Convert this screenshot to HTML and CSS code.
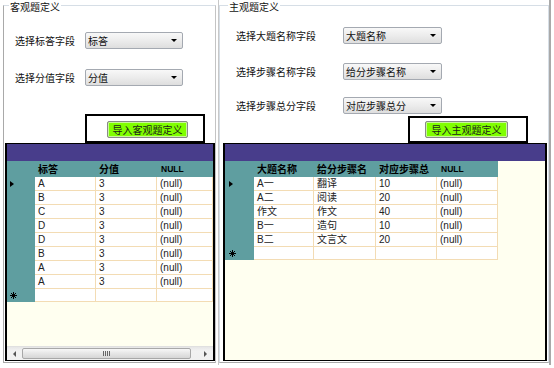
FILE: index.html
```html
<!DOCTYPE html>
<html>
<head>
<meta charset="utf-8">
<link rel="stylesheet" href="styles.css">
</head>
<body>
<div class="app">
  <div class="panel panel-left">
    <div class="group group-left">
      <span class="legend">客观题定义</span>
      <div class="field f1"><span class="lbl">选择标答字段</span><div class="combo"><span>标答</span><i class="arrow"></i></div></div>
      <div class="field f2"><span class="lbl">选择分值字段</span><div class="combo"><span>分值</span><i class="arrow"></i></div></div>
      <div class="frame"><button class="btn">导入客观题定义</button></div>
      <div class="grid">
        <div class="caption"></div>
        <div class="row hdr"><div class="rh"></div><div class="cell w61">标答</div><div class="cell w61">分值</div><div class="cell fill null">NULL</div></div>
        <div class="row"><div class="rh"><i class="cur"></i></div><div class="cell w61">A</div><div class="cell w61">3</div><div class="cell fill">(null)</div></div>
        <div class="row"><div class="rh"></div><div class="cell w61">B</div><div class="cell w61">3</div><div class="cell fill">(null)</div></div>
        <div class="row"><div class="rh"></div><div class="cell w61">C</div><div class="cell w61">3</div><div class="cell fill">(null)</div></div>
        <div class="row"><div class="rh"></div><div class="cell w61">D</div><div class="cell w61">3</div><div class="cell fill">(null)</div></div>
        <div class="row"><div class="rh"></div><div class="cell w61">D</div><div class="cell w61">3</div><div class="cell fill">(null)</div></div>
        <div class="row"><div class="rh"></div><div class="cell w61">B</div><div class="cell w61">3</div><div class="cell fill">(null)</div></div>
        <div class="row"><div class="rh"></div><div class="cell w61">A</div><div class="cell w61">3</div><div class="cell fill">(null)</div></div>
        <div class="row"><div class="rh"></div><div class="cell w61">A</div><div class="cell w61">3</div><div class="cell fill">(null)</div></div>
        <div class="row newrow"><div class="rh"><svg class="star" width="7" height="7" viewBox="0 0 7 7"><path d="M3.5 0V7M0 3.5H7M1 1L6 6M6 1L1 6" stroke="#000" stroke-width="1" fill="none"/></svg></div><div class="cell w61"></div><div class="cell w61"></div><div class="cell fill"></div></div>
        <div class="filler"></div>
        <div class="hscroll">
          <div class="sbtn"><i class="tl"></i></div>
          <div class="thumb"><span class="grip"></span></div>
          <div class="track"></div>
          <div class="sbtn"><i class="tr"></i></div>
        </div>
      </div>
    </div>
  </div>
  <div class="panel panel-right">
    <div class="group group-right">
      <span class="legend">主观题定义</span>
      <div class="field r1"><span class="lbl">选择大题名称字段</span><div class="combo"><span>大题名称</span><i class="arrow"></i></div></div>
      <div class="field r2"><span class="lbl">选择步骤名称字段</span><div class="combo"><span>给分步骤名称</span><i class="arrow"></i></div></div>
      <div class="field r3"><span class="lbl">选择步骤总分字段</span><div class="combo"><span>对应步骤总分</span><i class="arrow"></i></div></div>
      <div class="frame"><button class="btn">导入主观题定义</button></div>
      <div class="grid">
        <div class="caption"></div>
        <div class="row hdr"><div class="rh"></div><div class="cell w60">大题名称</div><div class="cell w62">给分步骤名</div><div class="cell w61">对应步骤总</div><div class="cell w61 null">NULL</div></div>
        <div class="row"><div class="rh"><i class="cur"></i></div><div class="cell w60">A一</div><div class="cell w62">翻译</div><div class="cell w61">10</div><div class="cell w61">(null)</div></div>
        <div class="row"><div class="rh"></div><div class="cell w60">A二</div><div class="cell w62">阅读</div><div class="cell w61">20</div><div class="cell w61">(null)</div></div>
        <div class="row"><div class="rh"></div><div class="cell w60">作文</div><div class="cell w62">作文</div><div class="cell w61">40</div><div class="cell w61">(null)</div></div>
        <div class="row"><div class="rh"></div><div class="cell w60">B一</div><div class="cell w62">造句</div><div class="cell w61">10</div><div class="cell w61">(null)</div></div>
        <div class="row"><div class="rh"></div><div class="cell w60">B二</div><div class="cell w62">文言文</div><div class="cell w61">20</div><div class="cell w61">(null)</div></div>
        <div class="row newrow"><div class="rh"><svg class="star" width="7" height="7" viewBox="0 0 7 7"><path d="M3.5 0V7M0 3.5H7M1 1L6 6M6 1L1 6" stroke="#000" stroke-width="1" fill="none"/></svg></div><div class="cell w60"></div><div class="cell w62"></div><div class="cell w61"></div><div class="cell w61"></div></div>
        <div class="filler"></div>
      </div>
    </div>
  </div>
</div>
</body>
</html>
```

FILE: styles.css
```css
* { box-sizing: border-box; }
html, body { margin: 0; padding: 0; }
body {
  width: 554px;
  height: 368px;
  overflow: hidden;
  background: #fff;
  font-family: "Noto Sans CJK SC", "Liberation Sans", sans-serif;
  font-size: 10px;
  color: #000;
}
.app {
  display: flex;
  height: 368px;
}
.panel-left {
  width: 216px;
  padding-left: 3px;
  flex: none;
}
.panel-right {
  margin-left: 2px;
  border-left: 1px solid #c8c8c8;
  border-right: 2px solid #a9a9a9;
  height: 365px;
  flex: none;
}
.group {
  margin-top: 5px;
  height: 358px;
  border: 1px solid #d6dee6;
  display: flex;
  flex-direction: column;
  align-items: flex-start;
}
.group-left {
  width: 213px;
  border-left-color: #a9a9a9;
  border-bottom-color: #a9a9a9;
  border-right-color: #c4c4c4;
}
.group-right {
  width: 330px;
  border-bottom-color: #a9a9a9;
}
.legend {
  margin-top: -5px;
  padding: 0 1px;
  line-height: 11px;
  background: #fff;
  color: #111;
}
.group-left .legend { margin-left: 5px; }
.group-right .legend { margin-left: 8px; }

.field {
  display: flex;
  align-items: center;
  height: 17px;
}
.lbl { color: #111; }
.group-left .field { padding-left: 11px; }
.group-left .lbl { width: 70px; }
.group-right .field { padding-left: 16px; }
.group-right .lbl { width: 107px; }
.f1 { margin-top: 20px; }
.f2 { margin-top: 20px; }
.r1 { margin-top: 15px; }
.r2 { margin-top: 19px; }
.r3 { margin-top: 17px; }

.combo {
  height: 17px;
  width: 98px;
  border: 1px solid #a4a9b1;
  border-radius: 2px;
  background: linear-gradient(#f8f8f8, #ececec 50%, #dedede);
  display: flex;
  align-items: center;
  padding-left: 2px;
  line-height: 15px;
  color: #111;
}
.group-right .combo { width: 99px; }
.arrow {
  margin-left: auto;
  margin-right: 5px;
  width: 0;
  height: 0;
  border-left: 3px solid transparent;
  border-right: 3px solid transparent;
  border-top: 3px solid #000;
}

.frame {
  border: 2px solid #000;
  width: 120px;
  flex: none;
}
.group-left .frame {
  margin-left: 81px;
  margin-top: 28px;
  height: 29px;
  padding: 5px 0 0 20px;
}
.group-right .frame {
  margin-left: 188px;
  margin-top: 2px;
  height: 27px;
  padding: 3px 0 0 15px;
}
.btn {
  display: block;
  height: 17px;
  padding: 0;
  margin: 0;
  border: 1px solid #8a8a8a;
  border-radius: 2px;
  background: #80ff00;
  box-shadow: inset 0 0 0 1px #c8f59a;
  font-family: "Noto Sans CJK SC", sans-serif;
  font-size: 10px;
  line-height: 15px;
  color: #1a1a1a;
  text-align: center;
}
.group-left .btn { width: 81px; }
.group-right .btn { width: 83px; }

.grid {
  flex: none;
  height: 218px;
  border: 1px solid #000;
  border-left-width: 2px;
  border-right-width: 2px;
  background: #fffff0;
  display: flex;
  flex-direction: column;
  overflow: hidden;
}
.group-left .grid { width: 210px; margin-left: 1px; }
.group-right .grid { width: 324px; margin-left: 3px; }

.caption {
  height: 17px;
  background: #483d8b;
  flex: none;
}
.row {
  display: flex;
  height: 14px;
  flex: none;
  font-family: "Liberation Sans", "Noto Sans CJK SC", sans-serif;
  font-size: 10px;
  color: #222;
}
.row.hdr { height: 16px; }
.row.newrow { height: 13px; }
.rh {
  width: 28px;
  flex: none;
  background: #5f9ea0;
  display: flex;
  align-items: center;
  padding-left: 3px;
}
.group-right .rh { width: 29px; padding-left: 4px; }
.cur {
  width: 0;
  height: 0;
  border-left: 4px solid #000;
  border-top: 3.5px solid transparent;
  border-bottom: 3.5px solid transparent;
}
.star { display: block; }
.cell {
  flex: none;
  background: #fff;
  border-right: 1px solid #f3dcb4;
  border-bottom: 1px solid #f3dcb4;
  padding-left: 3px;
  line-height: 13px;
  white-space: nowrap;
  overflow: hidden;
}
.newrow .cell { line-height: 12px; }
.hdr .cell {
  background: #5f9ea0;
  border: none;
  font-family: "Noto Sans CJK SC", sans-serif;
  font-weight: bold;
  line-height: 16px;
  color: #000;
}
.hdr .cell.null {
  font-family: "Liberation Sans", sans-serif;
  font-size: 8.5px;
  padding-left: 4px;
}
.w60 { width: 60px; }
.w61 { width: 61px; }
.w62 { width: 62px; }
.fill { flex: 1; }
.filler { flex: 1; }

.hscroll {
  flex: none;
  height: 14px;
  display: flex;
  align-items: stretch;
  background: linear-gradient(#e6e6e6, #f2f2f2 30%, #f0f0f0);
  border-top: 1px solid #e0e0e0;
}
.sbtn {
  width: 15px;
  flex: none;
  display: flex;
  align-items: center;
  justify-content: center;
}
.tl {
  width: 0; height: 0;
  border-right: 3px solid #555;
  border-top: 3px solid transparent;
  border-bottom: 3px solid transparent;
}
.tr {
  width: 0; height: 0;
  border-left: 3px solid #555;
  border-top: 3px solid transparent;
  border-bottom: 3px solid transparent;
}
.thumb {
  width: 169px;
  flex: none;
  margin: 1px 0;
  border: 1px solid #a8a8a8;
  border-radius: 2px;
  background: linear-gradient(#f7f7f7, #e6e6e6 50%, #d6d6d6);
  display: flex;
  align-items: center;
  justify-content: center;
}
.grip {
  width: 7px;
  height: 5px;
  background: repeating-linear-gradient(90deg, #666 0 1px, transparent 1px 2px);
}
.track { flex: 1; }
```
